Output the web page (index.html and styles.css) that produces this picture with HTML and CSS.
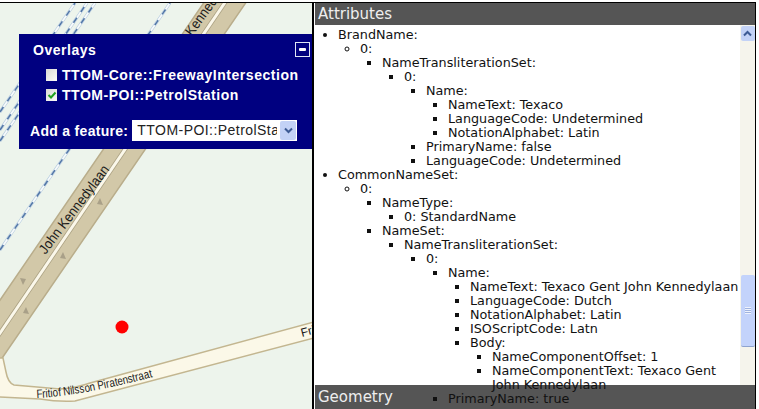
FILE: index.html
```html
<!DOCTYPE html>
<html lang="en">
<head>
    <meta charset="UTF-8">
    <meta name="viewport" content="width=device-width, initial-scale=1.0">
    <title>Feature Viewer</title>
    <link rel="stylesheet" href="styles.css">
</head>
<body>
    <div class="app">
        <div class="map-pane">
            <svg class="map" width="312" height="406" viewBox="0 3 312 406">
                <!-- railway lines -->
                <path class="rail-base" d="M0 250L170 3M0 141L95 3M0 130L87 3M0 112L75 3"/>
                <path class="rail-line" d="M0 250L170 3M0 141L95 3M0 130L87 3M0 112L75 3"/>
                <path class="rail-dash" d="M0 250L170 3M0 141L95 3M0 130L87 3M0 112L75 3"/>

                <!-- motorway -->
                <polygon class="road-band" points="-2,303 205,1 247,1 -2,364"/>
                <path class="road-median" d="M-2 336L226 1"/>
                <path class="road-median-line" d="M-2 336L226 1"/>
                <polygon class="road-arrow" points="100,198 103,205 97,204"/>
                <polygon class="road-arrow" points="63,252 66,259 60,258"/>
                <polygon class="road-arrow" points="23,285 20,278 26,279"/>
                <polygon class="road-arrow" points="26,307 29,314 23,313"/>

                <!-- side street -->
                <path class="street" d="M-2 358H3L6 372Q8 383 14 385L60 389Q76 388 90 383L314 322V338L75 401Q58 402 40 399L-2 397Z"/>

                <text class="road-label" x="45.5" y="255" textLength="107" lengthAdjust="spacingAndGlyphs" transform="rotate(-53 45.5 255)">John Kennedylaan</text>
                <text class="road-label" x="173.5" y="62" textLength="106" lengthAdjust="spacingAndGlyphs" transform="rotate(-54 173.5 62)">John Kennedylaan</text>
                <path id="street-path" class="no-stroke" d="M37 398Q80 396 153 377"/>
                <text class="street-label"><textPath href="#street-path" textLength="118" lengthAdjust="spacingAndGlyphs">Fritiof Nilsson Piratenstraat</textPath></text>
                <text class="street-label" x="302" y="337" transform="rotate(-15 302 337)">Fritiof</text>

                <circle class="feature-dot" cx="122" cy="327" r="6.5"/>
            </svg>

            <div class="overlays">
                <div class="overlays-head">
                    <span class="overlays-title">Overlays</span>
                    <span class="minimize"><span class="minimize-bar"></span></span>
                </div>
                <div class="layers">
                    <div class="layer"><span class="check"></span>TTOM-Core::FreewayIntersection</div>
                    <div class="layer">
                        <span class="check">
                            <svg width="10" height="10" viewBox="0 0 10 10"><path class="tick" d="M1.5 5L4 7.5L8.5 2.5"/></svg>
                        </span>TTOM-POI::PetrolStation
                    </div>
                </div>
                <div class="add-feature">
                    <span class="add-label">Add a feature:</span>
                    <div class="select">
                        <span class="select-text">TTOM-POI::PetrolStation</span>
                        <span class="select-arrow">
                            <svg width="9" height="7" viewBox="0 0 9 7"><path class="chevron" d="M1 1.5L4.5 5L8 1.5"/></svg>
                        </span>
                    </div>
                </div>
            </div>
        </div>

        <div class="side-pane">
            <div class="pane-title">Attributes</div>
            <div class="pane-body">
                <div class="attrs">
                    <ul>
                        <li>BrandName:
                            <ul>
                                <li>0:
                                    <ul>
                                        <li>NameTransliterationSet:
                                            <ul>
                                                <li>0:
                                                    <ul>
                                                        <li>Name:
                                                            <ul>
                                                                <li>NameText: Texaco</li>
                                                                <li>LanguageCode: Undetermined</li>
                                                                <li>NotationAlphabet: Latin</li>
                                                            </ul>
                                                        </li>
                                                        <li>PrimaryName: false</li>
                                                        <li>LanguageCode: Undetermined</li>
                                                    </ul>
                                                </li>
                                            </ul>
                                        </li>
                                    </ul>
                                </li>
                            </ul>
                        </li>
                        <li>CommonNameSet:
                            <ul>
                                <li>0:
                                    <ul>
                                        <li>NameType:
                                            <ul>
                                                <li>0: StandardName</li>
                                            </ul>
                                        </li>
                                        <li>NameSet:
                                            <ul>
                                                <li>NameTransliterationSet:
                                                    <ul>
                                                        <li>0:
                                                            <ul>
                                                                <li>Name:
                                                                    <ul>
                                                                        <li>NameText: Texaco Gent John Kennedylaan</li>
                                                                        <li>LanguageCode: Dutch</li>
                                                                        <li>NotationAlphabet: Latin</li>
                                                                        <li>ISOScriptCode: Latn</li>
                                                                        <li>Body:
                                                                            <ul>
                                                                                <li>NameComponentOffset: 1</li>
                                                                                <li>NameComponentText: Texaco Gent John Kennedylaan</li>
                                                                            </ul>
                                                                        </li>
                                                                    </ul>
                                                                </li>
                                                                <li>PrimaryName: true</li>
                                                            </ul>
                                                        </li>
                                                    </ul>
                                                </li>
                                            </ul>
                                        </li>
                                    </ul>
                                </li>
                            </ul>
                        </li>
                    </ul>
                </div>
                <div class="scrollbar">
                    <div class="scroll-up">
                        <svg width="9" height="7" viewBox="0 0 9 7"><path class="chevron" d="M1 5.5L4.5 2L8 5.5"/></svg>
                    </div>
                    <div class="scroll-thumb">
                        <span class="grip"></span>
                    </div>
                </div>
            </div>
            <div class="pane-title geometry">Geometry</div>
        </div>
    </div>
</body>
</html>
```
FILE: styles.css
```css
html, body { margin: 0; height: 100%; background: #fff; overflow: hidden; }
body { font-family: "DejaVu Sans", Verdana, sans-serif; }
.app { display: flex; height: 406px; margin-top: 2px; margin-right: 3px; border-top: 1px solid #000; }

/* map side */
.map-pane { position: relative; width: 312px; height: 406px; flex: none; background: #edf4ec; border-right: 2px solid #000; }
.map { display: block; }
.rail-base { fill: none; stroke: #b7cce0; stroke-width: 3; }
.rail-line { fill: none; stroke: #f7fafa; stroke-width: 1.8; }
.rail-dash { fill: none; stroke: #5378a8; stroke-width: 1.6; stroke-dasharray: 6 7; }
.road-band { fill: #d2c8a8; stroke: #b9ad8b; stroke-width: 1.5; }
.road-median { fill: none; stroke: #a99f80; stroke-width: 4.5; }
.road-median-line { fill: none; stroke: #fbf8ea; stroke-width: 3; }
.road-arrow { fill: #a9a088; }
.street { fill: #fbf8e8; stroke: #c3b690; stroke-width: 1.5; }
.no-stroke { fill: none; }
.road-label { font-family: "Liberation Sans", Arial, sans-serif; font-size: 14px; fill: #1a1a1a; }
.street-label { font-family: "Liberation Sans", Arial, sans-serif; font-size: 12px; fill: #1a1a1a; }
.feature-dot { fill: #f00; }

/* overlays box */
.overlays { position: absolute; left: 19px; top: 31px; width: 293px; height: 115px; box-sizing: border-box; padding-top: 8px; background: #000080; color: #fff; font-family: "Liberation Sans", Arial, sans-serif; font-size: 14px; font-weight: bold; letter-spacing: 0.53px; }
.overlays-head { display: flex; justify-content: space-between; align-items: center; height: 15px; padding: 0 2px 0 14px; }
.minimize { display: flex; align-items: center; justify-content: center; width: 13px; height: 13px; border: 1px solid #dfe6f5; }
.minimize-bar { width: 7px; height: 3px; background: #fff; border-radius: 1px; }
.layers { margin-top: 8px; padding-left: 27px; }
.layer { display: flex; align-items: center; gap: 5px; height: 20px; }
.check { display: flex; align-items: center; justify-content: center; width: 11px; height: 12px; background: linear-gradient(135deg, #d8d8d4, #fbfbf9); }
.tick { fill: none; stroke: #21a121; stroke-width: 2; }
.add-feature { display: flex; align-items: center; gap: 4px; margin-top: 15px; padding-left: 11px; }
.add-label { letter-spacing: 0.3px; }
.select { display: flex; width: 165px; height: 21px; box-sizing: border-box; background: #fff; padding: 1px; }
.select-text { flex: 1; min-width: 0; margin-right: 3px; padding-left: 4px; overflow: hidden; white-space: nowrap; color: #222; font-weight: normal; font-size: 14px; letter-spacing: 0.45px; line-height: 19px; }
.select-arrow { display: flex; align-items: center; justify-content: center; width: 16px; flex: none; background: #c3d2f6; border-radius: 2px; }
.chevron { fill: none; stroke: #3c5a94; stroke-width: 2; }

/* attributes side */
.side-pane { position: relative; display: flex; flex-direction: column; width: 440px; margin-left: 1px; border-right: 1px solid #000; overflow: hidden; }
.pane-title { height: 22px; flex: none; padding-left: 3px; background: #555; color: #eee; font-size: 15px; line-height: 23px; }
.pane-body { display: flex; flex: 1; min-height: 0; }
.geometry { position: absolute; left: 0; right: 0; bottom: 0; height: 24px; line-height: 25px; }
.attrs { position: relative; z-index: 1; flex: 1; min-width: 0; padding: 3px 0 0 1px; overflow: hidden; color: #111; font-size: 12.75px; line-height: 14px; }
.attrs ul { margin: 0; padding-left: 22px; }
.scrollbar { display: flex; flex-direction: column; align-items: center; width: 15px; height: 360px; flex: none; background: #f5f4ec; }
.scroll-up { display: flex; align-items: center; justify-content: center; width: 14px; height: 15px; margin-top: 1px; background: #c3d2f6; border-radius: 2px; }
.scroll-thumb { display: flex; align-items: center; justify-content: center; width: 14px; height: 72px; margin-top: 234px; background: #c3d3fb; border-radius: 2px; border-bottom: 1px solid #8ea3cf; box-sizing: border-box; }
.grip { width: 6px; height: 7px; background: repeating-linear-gradient(#eef2fd 0 1px, #9fb3e0 1px 2px); }
```
